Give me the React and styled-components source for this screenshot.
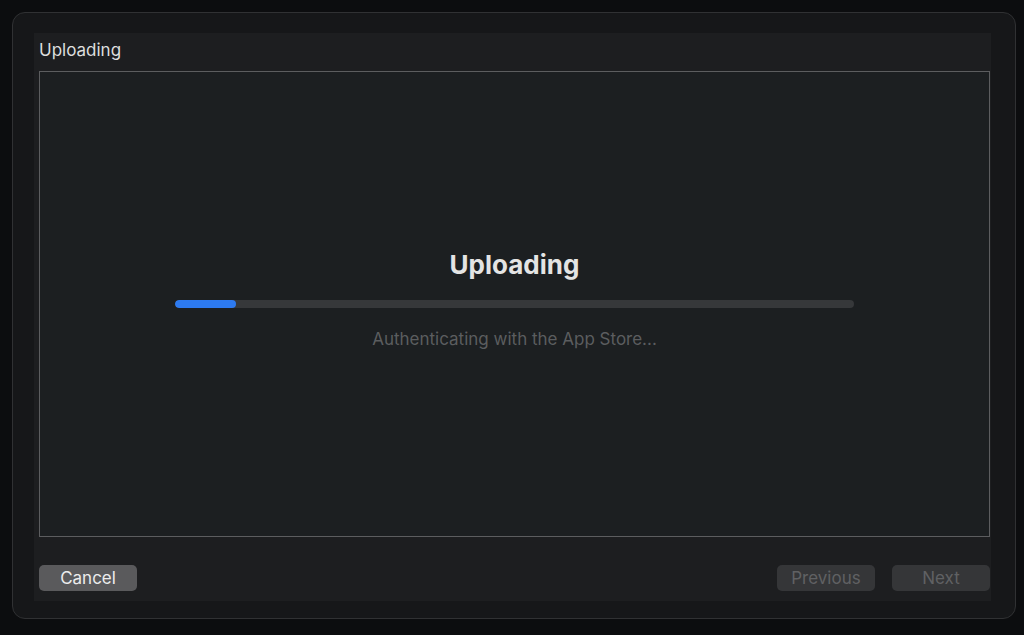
import React from 'react'
import styled, { createGlobalStyle } from 'styled-components'

const GlobalStyle = createGlobalStyle`
  html, body {
    margin: 0;
    padding: 0;
    background: #0c0d0f;
    font-family: Inter, "Liberation Sans", sans-serif;
    -webkit-font-smoothing: antialiased;
  }
`;

const Page = styled.div`
  width: 1024px;
  height: 635px;
  padding: 12px;
  box-sizing: border-box;
`;

const Window = styled.div`
  width: 1004px;
  height: 607px;
  box-sizing: border-box;
  border: 1px solid #303133;
  border-radius: 13px;
  background: #161719;
  padding: 20px 24px 16px 21px;
`;

const Panel = styled.div`
  height: 568px;
  background: #1d1e20;
  padding: 0 1px 0 5px;
  display: flex;
  flex-direction: column;
`;

const Title = styled.div`
  height: 38px;
  padding-bottom: 4px;
  box-sizing: border-box;
  display: flex;
  align-items: center;
  color: #dedede;
  font-size: 17px;
`;

/* bottom padding keeps the progress bar on the box's vertical centre */
const ContentBox = styled.div`
  height: 466px;
  box-sizing: border-box;
  border: 1px solid #5c5d5f;
  background: #1c1f21;
  padding-bottom: 10px;
  display: flex;
  flex-direction: column;
  align-items: center;
  justify-content: center;
`;

const Heading = styled.h1`
  margin: 0;
  font-size: 26px;
  line-height: 32px;
  font-weight: 700;
  color: #e4e4e4;
`;

const Track = styled.div`
  width: 679px;
  height: 8px;
  margin-top: 19px;
  border-radius: 4px;
  background: #36383a;
  overflow: hidden;
`;

const Fill = styled.div`
  height: 100%;
  border-radius: 4px;
  background: #2d7af0;
`;

const Status = styled.div`
  margin-top: 21px;
  font-size: 17px;
  line-height: 20px;
  color: #5b5d5f;
`;

const Footer = styled.div`
  flex: 1;
  display: flex;
  align-items: flex-start;
  padding-top: 28px;
  gap: 17px;
`;

const Spacer = styled.div`
  flex: 1;
`;

const Button = styled.button`
  width: 98px;
  height: 26px;
  border: none;
  border-radius: 5px;
  font-family: inherit;
  font-size: 17px;
  padding: 0;
  background: ${({ disabled }) => (disabled ? '#353638' : '#5a5a5c')};
  color: ${({ disabled }) => (disabled ? '#606163' : '#ececec')};
`;

const progress = 9;

export default function App() {
  return (
    <Page>
      <GlobalStyle />
      <Window>
        <Panel>
          <Title>Uploading</Title>
          <ContentBox>
            <Heading>Uploading</Heading>
            <Track>
              <Fill style={{ width: `${progress}%` }} />
            </Track>
            <Status>Authenticating with the App Store...</Status>
          </ContentBox>
          <Footer>
            <Button>Cancel</Button>
            <Spacer />
            <Button disabled>Previous</Button>
            <Button disabled>Next</Button>
          </Footer>
        </Panel>
      </Window>
    </Page>
  )
}
